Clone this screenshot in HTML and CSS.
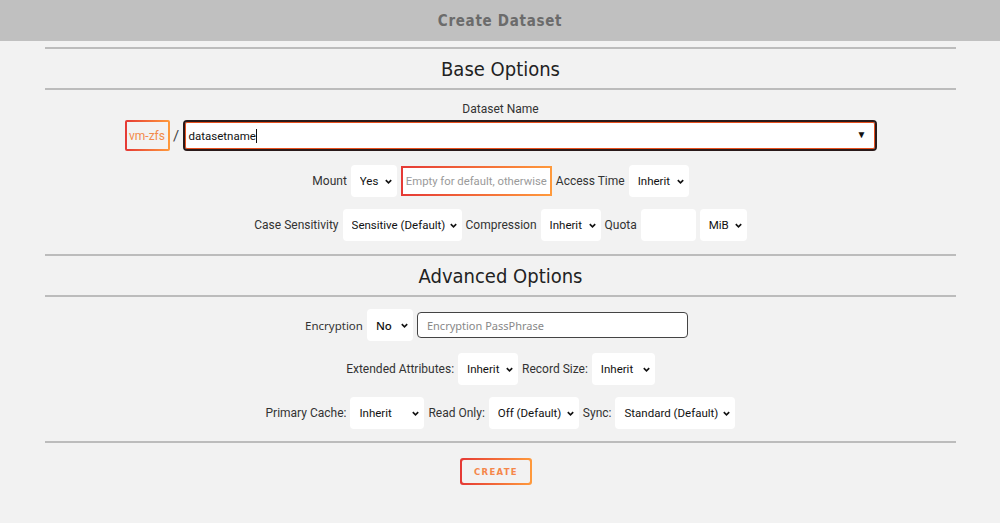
FILE: index.html
```html
<!DOCTYPE html>
<html>
<head>
<meta charset="utf-8">
<link rel="stylesheet" href="styles.css">
</head>
<body>
<header class="topbar">Create Dataset</header>
<main class="content">
  <hr class="rule">
  <h2 class="section-title">Base Options</h2>
  <hr class="rule">
  <div class="field-label">Dataset Name</div>
  <div class="row name-row">
    <div class="pool-box"><span>vm-zfs</span></div>
    <span class="slash">/</span>
    <div class="name-input">
      <span class="name-text">datasetname</span><span class="caret"></span>
      <span class="tri">&#9660;</span>
    </div>
  </div>
  <div class="row mount-row">
    <span class="lbl">Mount</span>
    <span class="sel w46"><select><option>Yes</option></select><svg class="chev" viewBox="0 0 10 10"><path d="M2 3.5 L5 6.5 L8 3.5" /></svg></span>
    <div class="grad-input"><span class="ph">Empty for default, otherwise</span></div>
    <span class="lbl">Access Time</span>
    <span class="sel w60"><select><option>Inherit</option></select><svg class="chev" viewBox="0 0 10 10"><path d="M2 3.5 L5 6.5 L8 3.5" /></svg></span>
  </div>
  <div class="row">
    <span class="lbl">Case Sensitivity</span>
    <span class="sel w119"><select><option>Sensitive (Default)</option></select><svg class="chev" viewBox="0 0 10 10"><path d="M2 3.5 L5 6.5 L8 3.5" /></svg></span>
    <span class="lbl">Compression</span>
    <span class="sel w60"><select><option>Inherit</option></select><svg class="chev" viewBox="0 0 10 10"><path d="M2 3.5 L5 6.5 L8 3.5" /></svg></span>
    <span class="lbl">Quota</span>
    <span class="plain-input"></span>
    <span class="sel w47 mib"><select><option>MiB</option></select><svg class="chev" viewBox="0 0 10 10"><path d="M2 3.5 L5 6.5 L8 3.5" /></svg></span>
  </div>
  <hr class="rule mt13">
  <h2 class="section-title">Advanced Options</h2>
  <hr class="rule">
  <div class="row adv first">
    <span class="lbl ub">Encryption</span>
    <span class="sel w46"><select class="ub"><option>No</option></select><svg class="chev" viewBox="0 0 10 10"><path d="M2 3.5 L5 6.5 L8 3.5" /></svg></span>
    <div class="pass-input"><span class="ph ub">Encryption PassPhrase</span></div>
  </div>
  <div class="row adv">
    <span class="lbl">Extended Attributes:</span>
    <span class="sel w60"><select><option>Inherit</option></select><svg class="chev" viewBox="0 0 10 10"><path d="M2 3.5 L5 6.5 L8 3.5" /></svg></span>
    <span class="lbl">Record Size:</span>
    <span class="sel w63"><select><option>Inherit</option></select><svg class="chev" viewBox="0 0 10 10"><path d="M2 3.5 L5 6.5 L8 3.5" /></svg></span>
  </div>
  <div class="row adv">
    <span class="lbl">Primary Cache:</span>
    <span class="sel w74"><select><option>Inherit</option></select><svg class="chev" viewBox="0 0 10 10"><path d="M2 3.5 L5 6.5 L8 3.5" /></svg></span>
    <span class="lbl">Read Only:</span>
    <span class="sel w90"><select><option>Off (Default)</option></select><svg class="chev" viewBox="0 0 10 10"><path d="M2 3.5 L5 6.5 L8 3.5" /></svg></span>
    <span class="lbl">Sync:</span>
    <span class="sel w120"><select><option>Standard (Default)</option></select><svg class="chev" viewBox="0 0 10 10"><path d="M2 3.5 L5 6.5 L8 3.5" /></svg></span>
  </div>
  <hr class="rule mt12">
  <div class="btn-row">
    <button class="create"><span>CREATE</span></button>
  </div>
</main>
</body>
</html>
```

FILE: styles.css
```css
* { box-sizing: border-box; }
html, body { margin: 0; padding: 0; }
body {
  background: #f2f2f2;
  font-family: Roboto, "Liberation Sans", sans-serif;
  color: #333;
  width: 1000px;
  height: 523px;
  overflow: hidden;
}
.topbar {
  height: 41px;
  background: #c0c0c0;
  color: #6b6b6b;
  font-family: "DejaVu Sans Condensed", "DejaVu Sans", sans-serif;
  font-weight: bold;
  font-size: 15px;
  letter-spacing: 0.7px;
  display: flex;
  align-items: center;
  justify-content: center;
}
.content {
  margin: 0 44px 0 45px;
  padding-top: 6px;
}
.rule {
  margin: 0;
  border: 0;
  height: 2px;
  background: #bcbcbc;
}
.mt12 { margin-top: 12px; }
.mt13 { margin-top: 13px; }
.section-title {
  margin: 0;
  height: 39px;
  display: flex;
  align-items: center;
  justify-content: center;
  font-family: "DejaVu Sans Condensed", "DejaVu Sans", sans-serif;
  font-weight: normal;
  font-size: 20px;
  color: #222;
}
.field-label {
  text-align: center;
  font-size: 12px;
  color: #333;
  margin-top: 11px;
  height: 17px;
  line-height: 17px;
}
.row {
  display: flex;
  align-items: center;
  justify-content: center;
  gap: 4px;
  margin-top: 12px;
  height: 32px;
}
.name-row { margin-top: 2px; gap: 0; height: 31px; }
.mount-row { margin-top: 14px; }
.pool-box {
  width: 45px;
  height: 31px;
  padding: 2px;
  border-radius: 2px;
  background: linear-gradient(90deg, #e53935, #ff9a3c);
  display: flex;
}
.pool-box span {
  flex: 1;
  background: #f2f2f2;
  color: #f28a4a;
  font-size: 12px;
  display: flex;
  align-items: center;
  justify-content: center;
}
.slash {
  font-size: 15px;
  color: #444;
  width: 13px;
  text-align: center;
}
.name-input {
  width: 694px;
  height: 31px;
  border: 2px solid #2a1a1a;
  box-shadow: inset 0 0 0 1px #e8501e;
  border-radius: 4px;
  background: #fff;
  display: flex;
  align-items: center;
  padding-left: 4px;
  font-size: 11.5px;
  color: #111;
  position: relative;
}
.caret {
  display: inline-block;
  width: 1px;
  height: 14px;
  background: #111;
}
.tri {
  position: absolute;
  right: 8px;
  top: 7px;
  font-size: 10px;
  color: #111;
}
.lbl {
  font-size: 12px;
  color: #333;
  white-space: nowrap;
}
.ub { font-family: "Noto Sans", sans-serif; }
.lbl.ub { font-size: 11.5px; }
.sel {
  position: relative;
  height: 32px;
  background: #fff;
  border-radius: 4px;
  display: inline-block;
  flex: none;
}
.sel select {
  appearance: none;
  -webkit-appearance: none;
  border: 0;
  background: transparent;
  width: 100%;
  height: 100%;
  font-family: Roboto, "Liberation Sans", sans-serif;
  font-size: 11.5px;
  color: #111;
  padding: 0 0 0 9px;
  outline: none;
}
.sel select.ub { font-family: "Noto Sans", sans-serif; font-weight: 500; font-size: 11.5px; }
.chev {
  position: absolute;
  right: 4px;
  top: 12px;
  width: 9px;
  height: 9px;
  fill: none;
  stroke: #111;
  stroke-width: 1.8;
  pointer-events: none;
}
.w46 { width: 46px; }
.w47 { width: 47px; }
.w60 { width: 60px; }
.w63 { width: 63px; }
.w74 { width: 74px; }
.w90 { width: 90px; }
.w119 { width: 119px; }
.w120 { width: 120px; }
.grad-input {
  width: 151px;
  height: 30px;
  padding: 2px;
  background: linear-gradient(90deg, #e53935, #ff9a3c);
  display: flex;
  flex: none;
}
.grad-input .ph {
  flex: 1;
  background: #fff;
  display: flex;
  align-items: center;
  padding-left: 3px;
  font-size: 11.3px;
  color: #9a9a9a;
  white-space: nowrap;
  overflow: hidden;
}
.plain-input {
  width: 55px;
  height: 32px;
  background: #fff;
  border-radius: 4px;
  flex: none;
}
.adv.first { margin-top: 12px; padding-right: 8px; }
.pass-input {
  width: 271px;
  height: 26px;
  border: 1px solid #444;
  border-radius: 4px;
  background: #fff;
  display: flex;
  align-items: center;
  padding-left: 9px;
  flex: none;
}
.pass-input .ph {
  font-size: 11px;
  color: #888;
}
.btn-row {
  display: flex;
  justify-content: center;
  margin-top: 15px;
  padding-right: 9px;
}
.create {
  width: 72px;
  height: 27px;
  padding: 2px;
  border: 0;
  border-radius: 3px;
  background: linear-gradient(90deg, #e53935, #ff9a3c);
  display: flex;
  cursor: pointer;
}
.create span {
  flex: 1;
  background: #f2f2f2;
  border-radius: 2px;
  display: flex;
  align-items: center;
  justify-content: center;
  font-family: "DejaVu Sans", sans-serif;
  font-weight: bold;
  font-size: 8.5px;
  letter-spacing: 1.3px;
  color: #f5874a;
}
```
